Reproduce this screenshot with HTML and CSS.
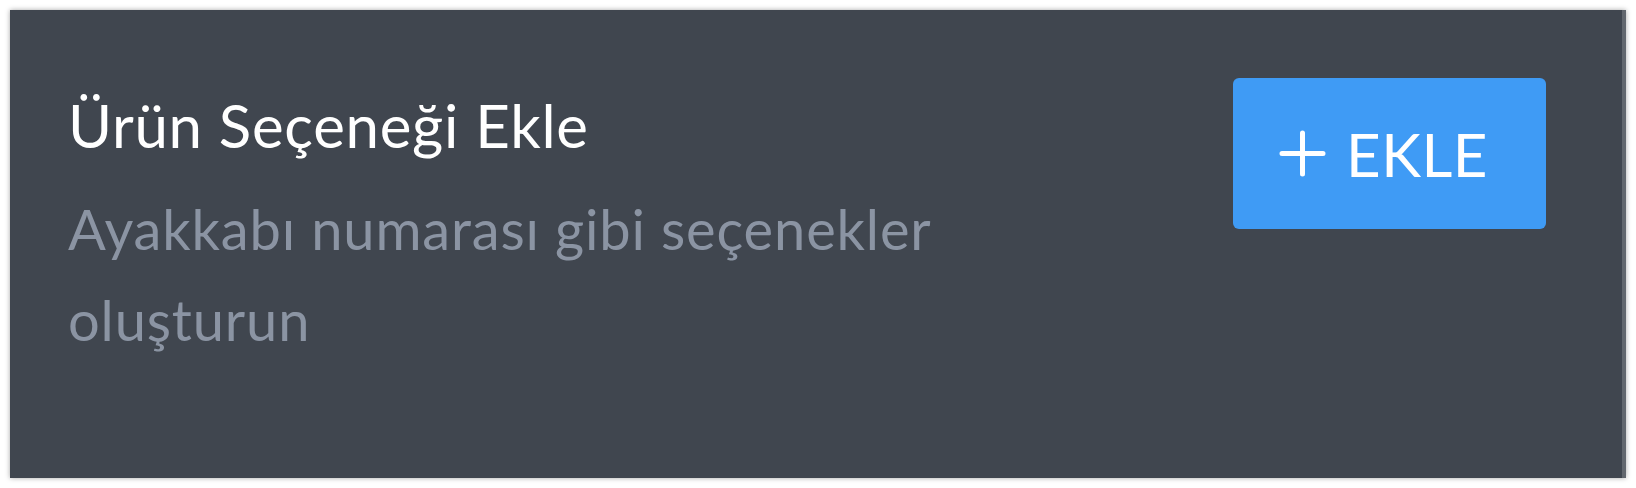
FILE: index.html
```html
<!DOCTYPE html>
<html lang="tr">
<head>
  <meta charset="UTF-8">
  <title>Ürün Seçeneği Ekle</title>
  <link rel="stylesheet" href="styles.css">
</head>
<body>
  <div class="panel">
    <div class="info">
      <h2 class="title">Ürün Seçeneği Ekle</h2>
      <p class="desc">Ayakkabı numarası gibi seçenekler oluşturun</p>
    </div>
    <button class="add-btn">
      <svg class="plus" width="47" height="47" viewBox="0 0 47 47">
        <path d="M23.5 3 V44 M3 23.5 H44" stroke="#fff" stroke-width="5" stroke-linecap="round" fill="none"/>
      </svg>
      <span>EKLE</span>
    </button>
  </div>
</body>
</html>
```

FILE: styles.css
```css
body { margin: 0; background: #fff; font-family: "Lato", "Noto Sans", sans-serif; }

.panel {
  margin: 10px;
  height: 468px;
  box-sizing: border-box;
  background: #40464f;
  border-right: 4px solid #62676e;
  box-shadow: 0 0 5px rgba(0, 0, 0, 0.35);
  padding: 68px 76px 0 58px;
  display: flex;
  justify-content: space-between;
  align-items: flex-start;
}

.info { max-width: 920px; }

.title {
  margin: 11px 0 0;
  font-size: 60px;
  line-height: 72px;
  font-weight: 400;
  letter-spacing: 0.7px;
  color: #fff;
}

.desc {
  margin: 22px 0 0;
  font-size: 56px;
  line-height: 91px;
  letter-spacing: 0.85px;
  color: #8b94a3;
}

.add-btn {
  width: 313px;
  height: 151px;
  border: 0;
  border-radius: 6px;
  background: #3f9bf5;
  color: #fff;
  font-family: inherit;
  font-size: 60px;
  letter-spacing: 0.5px;
  display: flex;
  align-items: center;
  justify-content: center;
  gap: 20px;
  padding: 0 12px 0 0;
}

.add-btn span { line-height: 1; }
```
